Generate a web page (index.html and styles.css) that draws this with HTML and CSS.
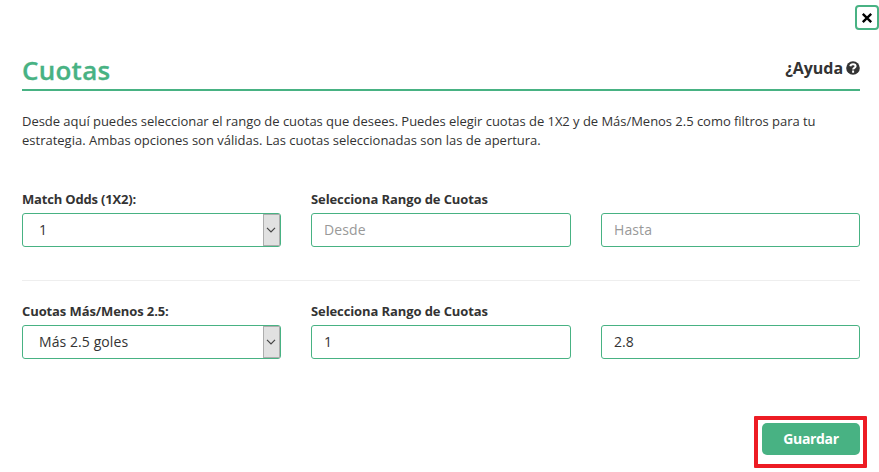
FILE: index.html
```html
<!DOCTYPE html>
<html lang="es">
<head>
<meta charset="utf-8">
<title>Cuotas</title>
<link rel="stylesheet" href="styles.css">
</head>
<body>
<main class="dialog">
  <button class="close" aria-label="Cerrar"><svg width="12" height="12" viewBox="0 0 12 12"><path d="M1.8 1.9 10.2 10.1M10.2 1.9 1.8 10.1"/></svg></button>
  <header class="header">
    <h1 class="title">Cuotas</h1>
    <a class="help"><span>¿Ayuda</span><svg width="14" height="14" viewBox="0 0 14 14"><circle cx="7" cy="7" r="6.8"/><path d="M4.3 5.3C4.8 2.6 9.6 2.8 9.6 5.3 9.6 7 7.1 6.7 7.1 8.6M7.1 9.6V11.7"/></svg></a>
  </header>
  <p class="intro"><span class="line line-one">Desde aquí puedes seleccionar el rango de cuotas que desees. Puedes elegir cuotas de 1X2 y de Más/Menos 2.5 como filtros para tu</span> <span class="line">estrategia. Ambas opciones son válidas. Las cuotas seleccionadas son las de apertura.</span></p>
  <section class="row">
    <div class="field">
      <label class="label label-match">Match Odds (1X2):</label>
      <div class="control select"><span class="value">1</span><span class="arrow"><svg width="10" height="6" viewBox="0 0 10 6"><path d="M1 .8 5 4.8 9 .8"/></svg></span></div>
    </div>
    <div class="field">
      <label class="label">Selecciona Rango de Cuotas</label>
      <div class="control placeholder"><span class="value">Desde</span></div>
    </div>
    <div class="field">
      <div class="label"></div>
      <div class="control placeholder"><span class="value">Hasta</span></div>
    </div>
  </section>
  <hr class="divider">
  <section class="row">
    <div class="field">
      <label class="label">Cuotas Más/Menos 2.5:</label>
      <div class="control select"><span class="value value-goals">Más 2.5 goles</span><span class="arrow"><svg width="10" height="6" viewBox="0 0 10 6"><path d="M1 .8 5 4.8 9 .8"/></svg></span></div>
    </div>
    <div class="field">
      <label class="label">Selecciona Rango de Cuotas</label>
      <div class="control"><span class="value">1</span></div>
    </div>
    <div class="field">
      <div class="label"></div>
      <div class="control"><span class="value">2.8</span></div>
    </div>
  </section>
  <footer class="footer"><div class="highlight"><button class="save">Guardar</button></div></footer>
</main>
</body>
</html>
```
FILE: styles.css
```css
* { box-sizing: border-box; }
body { margin: 0; background: #fff; color: #333; font: 13px/19px "Open Sans", sans-serif; }
.dialog { position: relative; height: 472px; padding: 50px 19px 0 22px; overflow: hidden; }
.close { position: absolute; top: 5px; left: 855px; width: 24px; height: 25px; padding: 0; display: flex; align-items: center; justify-content: center; background: #fff; border: 2px solid #48b283; border-radius: 4px; }
.close path { fill: none; stroke: #000; stroke-width: 2.4; }
.header { display: flex; justify-content: space-between; height: 41px; border-bottom: 2px solid #48b283; }
.title { margin: 2px 0 0; color: #48b283; font-size: 26px; line-height: 36px; font-weight: 600; letter-spacing: .25px; -webkit-text-stroke: .3px #48b283; }
.help { display: flex; align-items: center; gap: 3px; height: 22px; margin-top: 7px; font-size: 16px; font-weight: 700; }
.help span { letter-spacing: -.06px; }
.help circle { fill: #333; }
.help path { fill: none; stroke: #fff; stroke-width: 2; }
.intro { margin: 21px 0 0; }
.line { display: block; width: max-content; white-space: nowrap; }
.line-one { letter-spacing: -.033px; }
.row { display: grid; grid-template-columns: 259px 260px 259px; column-gap: 30px; }
.intro + .row { margin-top: 40px; }
.label { display: block; height: 23px; line-height: 19px; font-weight: 700; letter-spacing: -.1px; white-space: nowrap; }
.label-match { letter-spacing: -.18px; }
.control { display: flex; align-items: center; height: 34px; padding-left: 12px; border: 1px solid #48b283; border-radius: 3px; font-size: 14px; }
.value { padding-bottom: 2px; }
.value-goals { letter-spacing: .08px; }
.placeholder { color: #999; }
.placeholder .value { letter-spacing: .1px; }
.select { justify-content: space-between; padding-left: 16px; }
.arrow { display: flex; align-items: center; justify-content: center; width: 17px; height: 32px; padding-right: 2px; background: #e1e1e1; border: 1px solid #adadad; }
.arrow path { fill: none; stroke: #444; stroke-width: 1.2; }
.divider { height: 1px; margin: 33px 0 21px; border: 0; background: #eee; }
.footer { display: flex; justify-content: flex-end; margin: 57px -7px 0 0; }
.highlight { width: 113px; height: 52px; padding: 3px 4px; border: 4px solid #ed1c24; border-radius: 1px; }
.save { display: block; width: 98px; height: 32px; padding: 0 0 2px; border: 0; border-radius: 5px; background: #48b283; color: #fff; font: 700 14px "Open Sans", sans-serif; letter-spacing: -.35px; }
```
